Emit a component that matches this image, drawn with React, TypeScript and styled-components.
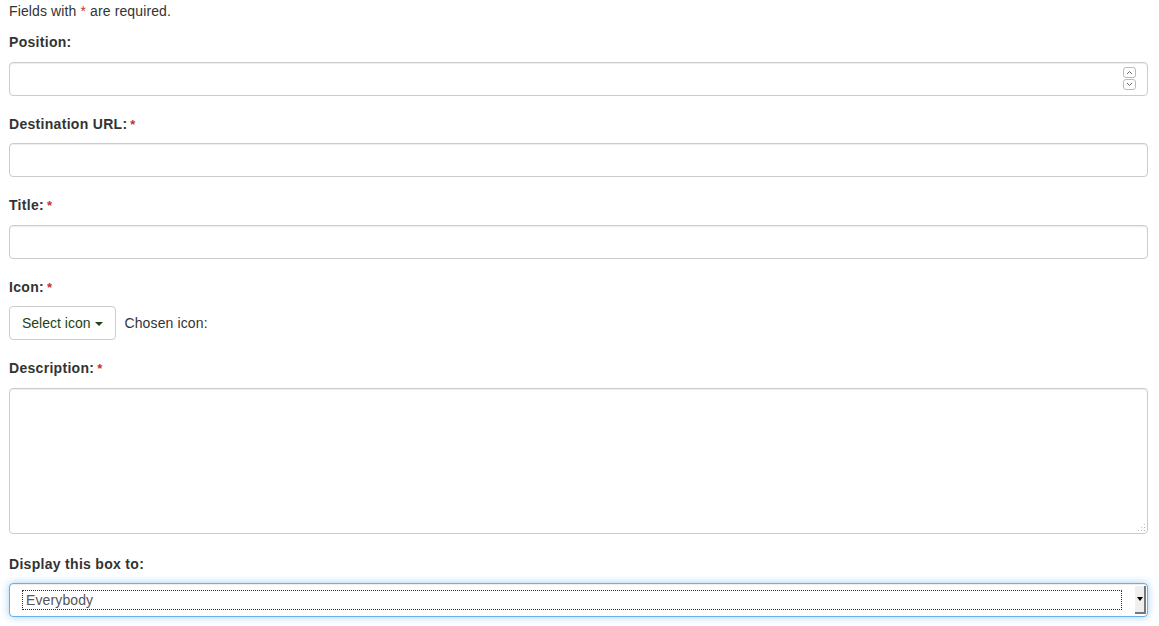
import React from "react";
import styled, { createGlobalStyle } from "styled-components";

const GlobalStyle = createGlobalStyle`
  html, body { margin: 0; padding: 0; background: #fff; }
  body {
    font-family: "Liberation Sans", Helvetica, Arial, sans-serif;
    font-size: 14px;
    line-height: 20px;
    color: #333;
    letter-spacing: 0.12px;
  }
  * { box-sizing: border-box; }
`;

const Page = styled.form`
  padding: 1px 11px 0 9px;
  display: flex;
  flex-direction: column;
`;

const Intro = styled.p`
  margin: 0 0 11px;
`;

const Req = styled.span`
  color: #c9302c;
  line-height: 0;
`;

const Group = styled.div<{ $gap?: number }>`
  display: flex;
  flex-direction: column;
  margin-bottom: ${(p) => (p.$gap ?? 18)}px;
`;

const Label = styled.label`
  font-weight: bold;
  letter-spacing: 0.3px;
  margin-bottom: 9.5px;
  display: block;
  ${Req} { margin-left: 3px; font-size: 13px; }
`;

const controlBase = `
  width: 100%;
  height: 34px;
  padding: 6px 12px;
  font-family: inherit;
  font-size: 14px;
  color: #555;
  background: #fff;
  border: 1px solid #ccc;
  border-radius: 4px;
  box-shadow: inset 0 1px 1px rgba(0,0,0,.075);
  outline: none;
`;

const Input = styled.input`
  ${controlBase}
`;

const Overlayed = styled.div`
  position: relative;
`;

const Spinner = styled.div`
  position: absolute;
  right: 12px;
  top: 5px;
  display: flex;
  flex-direction: column;
  gap: 1px;
`;

const SpinBtn = styled.span`
  width: 13px;
  height: 11px;
  border: 1px solid #bbb;
  border-radius: 3px;
  background: #fff;
  display: flex;
  align-items: center;
  justify-content: center;
`;

const TextArea = styled.textarea`
  ${controlBase}
  height: 146.3px;
  resize: none;
  display: block;
`;

const Grip = styled.span`
  position: absolute;
  right: 2px;
  bottom: 2px;
  width: 9px;
  height: 9px;
  background-image: radial-gradient(circle, #b0b0b0 0.8px, transparent 1px);
  background-size: 3px 3px;
  clip-path: polygon(100% 0, 100% 100%, 0 100%);
`;

const Row = styled.div`
  display: flex;
  align-items: center;
  gap: 8px;
`;

const Button = styled.button`
  height: 34px;
  padding: 6px 12px;
  font-family: inherit;
  font-size: 14px;
  line-height: 20px;
  letter-spacing: 0;
  color: #24420f;
  background: #fff;
  border: 1px solid #ccc;
  border-radius: 4px;
  display: flex;
  align-items: center;
  gap: 5px;
`;

const Caret = styled.span`
  width: 0;
  height: 0;
  border-left: 4px solid transparent;
  border-right: 4px solid transparent;
  border-top: 4px solid #24420f;
  margin-top: 1px;
`;

const SelectBox = styled.div`
  ${controlBase}
  border-color: #66afe9;
  box-shadow: inset 0 1px 1px rgba(0,0,0,.075), 0 0 8px rgba(102,175,233,.6);
  padding: 0 1px 0 12px;
  display: flex;
  align-items: center;
`;

const FocusRing = styled.span`
  flex: 1;
  height: 20px;
  border: 1px dotted #333;
  padding-left: 3px;
  line-height: 18px;
  color: #555;
  margin-right: 13px;
`;

const ArrowBtn = styled.span`
  width: 11px;
  height: 28px;
  background: #efefef;
  border-right: 2px solid #777;
  border-bottom: 2px solid #777;
  display: flex;
  align-items: center;
  justify-content: center;
`;

const Triangle = styled.span`
  width: 0;
  height: 0;
  border-left: 3.5px solid transparent;
  border-right: 3.5px solid transparent;
  border-top: 4px solid #000;
  margin-left: 1px;
`;

const Chevron = ({ up }: { up?: boolean }) => (
  <svg width="7" height="5" viewBox="0 0 7 5">
    <path
      d={up ? "M1 4 L3.5 1.5 L6 4" : "M1 1 L3.5 3.5 L6 1"}
      fill="none"
      stroke="#666"
      strokeWidth="1"
    />
  </svg>
);

export default function App() {
  return (
    <>
      <GlobalStyle />
      <Page onSubmit={(e) => e.preventDefault()}>
        <Intro>
          Fields with <Req>*</Req> are required.
        </Intro>

        <Group>
          <Label>Position:</Label>
          <Overlayed>
            <Input type="text" />
            <Spinner>
              <SpinBtn><Chevron up /></SpinBtn>
              <SpinBtn><Chevron /></SpinBtn>
            </Spinner>
          </Overlayed>
        </Group>

        <Group>
          <Label>
            Destination URL:<Req>*</Req>
          </Label>
          <Input type="text" />
        </Group>

        <Group>
          <Label>
            Title:<Req>*</Req>
          </Label>
          <Input type="text" />
        </Group>

        <Group>
          <Label>
            Icon:<Req>*</Req>
          </Label>
          <Row>
            <Button type="button">
              Select icon<Caret />
            </Button>
            <span>Chosen icon:</span>
          </Row>
        </Group>

        <Group $gap={20}>
          <Label>
            Description:<Req>*</Req>
          </Label>
          <Overlayed>
            <TextArea />
            <Grip />
          </Overlayed>
        </Group>

        <Group $gap={8}>
          <Label>Display this box to:</Label>
          <SelectBox>
            <FocusRing>Everybody</FocusRing>
            <ArrowBtn>
              <Triangle />
            </ArrowBtn>
          </SelectBox>
        </Group>
      </Page>
    </>
  );
}
